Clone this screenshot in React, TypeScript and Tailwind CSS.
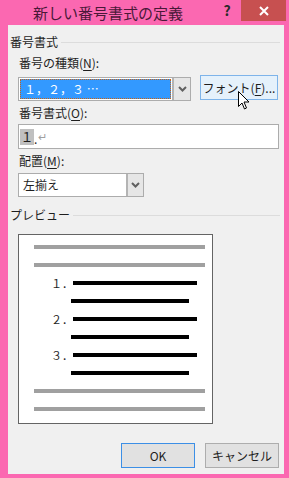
import React from "react";

const jp = { fontFamily: '"Noto Sans CJK JP", "Noto Sans", sans-serif' };

function Chevron() {
  return (
    <svg width="9" height="6" viewBox="0 0 9 6">
      <path d="M1 1l3.5 3.5L8 1" fill="none" stroke="#606060" strokeWidth="2" />
    </svg>
  );
}

function Label({ text, mnemonic }: { text: string; mnemonic: string }) {
  return (
    <div className="h-[14px] flex items-center text-[12px] leading-none text-[#1e1e1e] pl-[11px]">
      {text}(<span className="underline underline-offset-2">{mnemonic}</span>):
    </div>
  );
}

function GroupHeader({ text }: { text: string }) {
  return (
    <div className="h-[16px] flex items-center gap-[3px] pl-[2px] pr-[4px] text-[12px] leading-none text-[#1e1e1e]">
      <span>{text}</span>
      <div className="flex-1 h-px bg-[#dcdcdc]" />
    </div>
  );
}

export default function App() {
  const rows = [
    { kind: "gray" },
    { kind: "gray" },
    { kind: "num", n: "１．" },
    { kind: "cont" },
    { kind: "num", n: "２．" },
    { kind: "cont" },
    { kind: "num", n: "３．" },
    { kind: "cont" },
    { kind: "gray" },
    { kind: "gray" },
  ];

  return (
    <div className="relative w-[289px] h-[478px] bg-[#fb68b1] flex flex-col select-none" style={jp}>
      {/* title bar */}
      <div className="h-[25px] flex items-start shrink-0">
        <div className="w-[216px] h-[25px] flex items-center justify-center text-[15px] leading-none text-[#4a1838]">
          新しい番号書式の定義
        </div>
        <div className="w-[22px] h-[21px] flex items-center justify-center text-[14px] font-bold text-[#2a2a2a]">?</div>
        <div className="ml-[3px] w-[45px] h-[21px] bg-[#c75050] flex items-center justify-center">
          <svg width="10" height="10" viewBox="0 0 10 10">
            <path d="M1 1l8 8M9 1l-8 8" stroke="white" strokeWidth="2" />
          </svg>
        </div>
      </div>

      {/* client area */}
      <div className="flex-1 ml-[8px] mr-[5px] mb-[4px] bg-[#f0f0f0] pt-[9px] flex flex-col">
        <GroupHeader text="番号書式" />

        <div className="mt-[6px]">
          <Label text="番号の種類" mnemonic="N" />
        </div>

        <div className="mt-[5px] flex items-start pl-[10px] h-[26px]">
          <div className="mt-[2px] w-[173px] h-[24px] bg-white border border-[#acacac] flex">
            <div className="flex-1 p-[1px]">
              <div className="h-full bg-[#3399ff] border border-dotted border-[#c86414] flex items-center pl-[3px] text-[12px] leading-none text-white">
                １，２，３ …
              </div>
            </div>
            <div className="w-[18px] h-full border-l-2 border-[#b4b4b4] bg-[#e6e6e6] flex items-center justify-center">
              <Chevron />
            </div>
          </div>
          <div className="ml-[9px] w-[78px] h-[25px] bg-[#e5f1fb] border border-[#7eb4ea] flex items-center justify-center text-[12px] leading-none text-[#1e1e1e]">
            フォント(<span className="underline underline-offset-2">F</span>)...
          </div>
        </div>

        <div className="mt-[5px]">
          <Label text="番号書式" mnemonic="O" />
        </div>

        <div className="mt-[4px] ml-[10px] w-[261px] h-[25px] bg-white border border-[#acacac] flex items-center pl-[1px]">
          <span className="bg-[#c0c0c0] h-[16px] w-[14px] flex items-center justify-center text-[13px] leading-none text-[#1e1e1e]">１</span>
          <span className="text-[12px] leading-none text-[#1e1e1e] mt-[4px]">.</span>
          <span className="text-[11px] leading-none text-[#a0a0a0] ml-[1px]">↵</span>
        </div>

        <div className="mt-[5px]">
          <Label text="配置" mnemonic="M" />
        </div>

        <div className="mt-[5px] ml-[10px] w-[126px] h-[24px] bg-white border border-[#acacac] flex">
          <div className="flex-1 flex items-center pl-[4px] text-[12px] leading-none text-[#1e1e1e]">左揃え</div>
          <div className="w-[17px] h-full border-l-2 border-[#b4b4b4] bg-[#e6e6e6] flex items-center justify-center">
            <Chevron />
          </div>
        </div>

        <div className="mt-[10px]">
          <GroupHeader text="プレビュー" />
        </div>

        <div className="mt-[11px] ml-[10px] w-[195px] h-[190px] bg-white border border-[#646464] pt-[3px] flex flex-col">
          {rows.map((r, i) => (
            <div key={i} className="h-[18px] flex items-center shrink-0">
              {r.kind === "gray" && <div className="ml-[15px] w-[171px] h-[4px] bg-[#a0a0a0]" />}
              {r.kind === "num" && (
                <>
                  <span className="ml-[32px] w-[22px] text-[11px] leading-none text-[#1e1e1e]">{r.n}</span>
                  <div className="w-[124px] h-[4px] bg-black" />
                </>
              )}
              {r.kind === "cont" && <div className="ml-[52px] w-[118px] h-[4px] bg-black" />}
            </div>
          ))}
        </div>

        <div className="mt-[19px] flex pl-[113px] gap-[10px]">
          <div className="w-[74px] h-[25px] border border-[#3c8fe6] bg-[#e1e1e1] flex items-center justify-center text-[12px] leading-none text-[#1e1e1e]">
            OK
          </div>
          <div className="w-[74px] h-[25px] border border-[#adadad] bg-[#e1e1e1] flex items-center justify-center text-[12px] leading-none text-[#1e1e1e]">
            キャンセル
          </div>
        </div>
      </div>

      {/* mouse pointer */}
      <svg className="absolute left-[238px] top-[91px]" width="13" height="20" viewBox="0 0 13 20">
        <path d="M0.5 0.5v15l3.5-3.5 2.5 6 2-1-2.5-6h5z" fill="white" stroke="black" strokeWidth="1" />
      </svg>
    </div>
  );
}
